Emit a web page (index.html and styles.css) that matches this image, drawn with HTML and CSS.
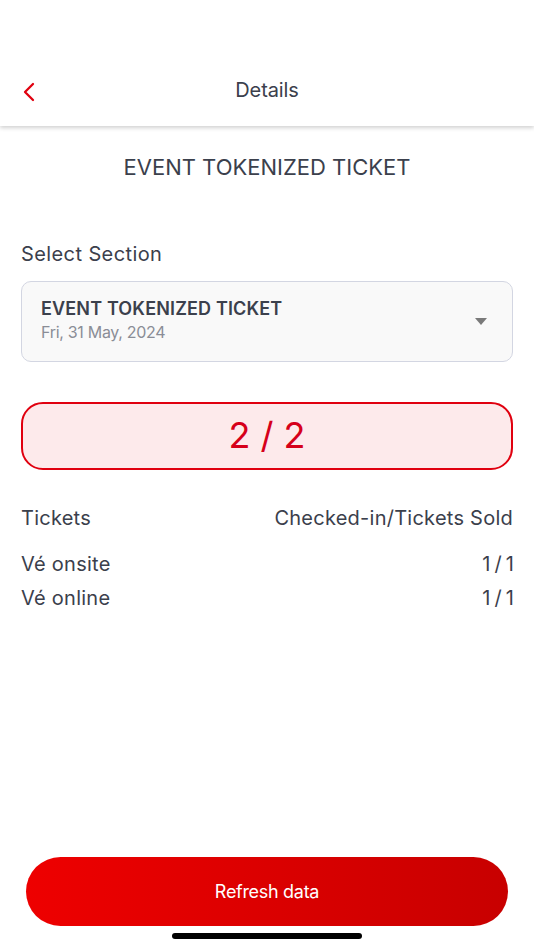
FILE: index.html
```html
<!DOCTYPE html>
<html>
<head>
<meta charset="utf-8">
<link rel="stylesheet" href="styles.css">
</head>
<body>
<div class="screen">
  <header class="topbar">
    <div class="nav">
      <button class="back" aria-label="Back">
        <svg width="14" height="20" viewBox="0 0 14 20"><path d="M11 2 L3 10 L11 18" fill="none" stroke="#e0000f" stroke-width="2.3" stroke-linecap="round" stroke-linejoin="round"/></svg>
      </button>
      <div class="nav-title">Details</div>
    </div>
  </header>
  <main class="content">
    <h1 class="event-title">EVENT TOKENIZED TICKET</h1>
    <div class="label">Select Section</div>
    <div class="select">
      <div class="select-text">
        <div class="select-name">EVENT TOKENIZED TICKET</div>
        <div class="select-date">Fri, 31 May, 2024</div>
      </div>
      <svg class="caret" width="12" height="7" viewBox="0 0 12 7"><path d="M0 0 L12 0 L6 7 Z" fill="#7a7a7a"/></svg>
    </div>
    <div class="counter">2 / 2</div>
    <div class="row row-head"><span>Tickets</span><span>Checked-in/Tickets Sold</span></div>
    <div class="rows">
      <div class="row"><span>Vé onsite</span><span class="count">1 / 1</span></div>
      <div class="row"><span>Vé online</span><span class="count">1 / 1</span></div>
    </div>
  </main>
  <div class="footer">
    <button class="refresh">Refresh data</button>
    <div class="home-indicator"></div>
  </div>
</div>
</body>
</html>
```
FILE: styles.css
```css
* { box-sizing: border-box; margin: 0; padding: 0; }
html, body { width: 534px; height: 950px; background: #fff; overflow: hidden; }
body { font-family: Inter, "Noto Sans", sans-serif; color: #3b404c; }
.screen { height: 950px; display: flex; flex-direction: column; }
.topbar { height: 126px; padding-top: 70px; background: #fff; box-shadow: 0 2px 4px rgba(0,0,0,0.18); position: relative; z-index: 1; }
.nav { height: 40px; display: flex; align-items: center; justify-content: center; position: relative; }
.back { position: absolute; left: 22px; top: 11px; background: none; border: none; width: 20px; height: 22px; display: flex; align-items: center; }
.nav-title { font-size: 20px; font-weight: 400; color: #3b404c; letter-spacing: -0.1px; }
.content { padding: 26px 21px 0; display: flex; flex-direction: column; flex: 1; }
.event-title { font-size: 22px; line-height: 30px; font-weight: 400; text-align: center; color: #3b404c; letter-spacing: 0; }
.label { margin-top: 58px; font-size: 20px; line-height: 28px; color: #3b404c; letter-spacing: 0.4px; }
.select { margin-top: 13px; height: 81px; border: 1.5px solid #d3d6e2; border-radius: 10px; background: #f9f9f9; display: flex; align-items: center; padding: 0 25px 0 19px; }
.select-text { flex: 1; display: flex; flex-direction: column; padding-bottom: 4px; }
.select-name { font-size: 18px; line-height: 24px; font-weight: 600; color: #3b404c; letter-spacing: 0.15px; }
.select-date { font-size: 16px; line-height: 22px; color: #8a8d96; letter-spacing: -0.3px; }
.counter { margin-top: 40px; height: 68px; border: 2px solid #e0000f; border-radius: 22px; background: #fdeaeb; color: #d6001a; font-size: 36px; line-height: 62px; text-align: center; }
.row { display: flex; justify-content: space-between; font-size: 20px; line-height: 28px; color: #3b404c; letter-spacing: 0.25px; }
.count { letter-spacing: -0.8px; }
.row-head { margin-top: 34px; }
.rows { margin-top: 18px; display: flex; flex-direction: column; gap: 6px; }
.footer { display: flex; flex-direction: column; align-items: center; padding-bottom: 11px; }
.refresh { width: 482px; height: 69px; border: none; border-radius: 35px; background: linear-gradient(90deg, #ee0000, #c80000); color: #fff; font-family: Inter, "Noto Sans", sans-serif; font-size: 18px; letter-spacing: -0.3px; }
.home-indicator { margin-top: 7px; width: 190px; height: 6px; border-radius: 3px; background: #000; }
```
